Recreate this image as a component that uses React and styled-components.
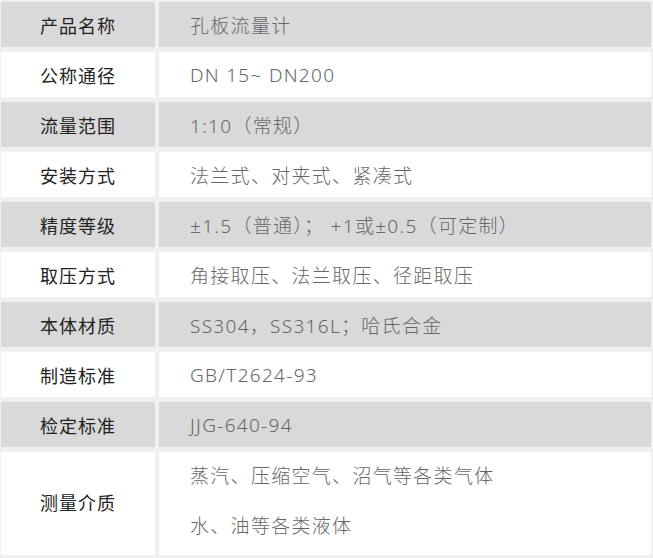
import styled, { createGlobalStyle } from 'styled-components';

const GlobalStyle = createGlobalStyle`
  html, body {
    margin: 0;
    padding: 0;
    background: #f0f0f0;
  }
  body {
    font-family: "Noto Sans", "Noto Sans CJK SC", sans-serif;
  }
`;

const Table = styled.div`
  width: 653px;
  height: 558px;
  box-sizing: border-box;
  padding: 2px 2px 3px 1px;
  display: grid;
  grid-template-columns: 154px 1fr;
  grid-auto-rows: 45px;
  column-gap: 4px;
  row-gap: 5px;
  background: #f0f0f0;
`;

const Label = styled.div`
  background: ${(p) => (p.$grey ? '#d9d9d9' : '#ffffff')};
  display: flex;
  align-items: center;
  justify-content: center;
  font-size: 18px;
  letter-spacing: 1px;
  color: #222;
`;

const Value = styled.div`
  background: ${(p) => (p.$grey ? '#d9d9d9' : '#ffffff')};
  display: flex;
  flex-direction: column;
  justify-content: center;
  padding-left: 31px;
  font-size: 19px;
  letter-spacing: 1.3px;
  color: #666;
  font-weight: 300;
`;

const Line = styled.div`
  line-height: 50px;
`;

const LastLabel = styled(Label)`
  height: 103px;
  padding-bottom: 4px;
  box-sizing: border-box;
`;

const LastValue = styled(Value)`
  height: 103px;
  padding-bottom: 6px;
  box-sizing: border-box;
`;

const rows = [
  ['产品名称', '孔板流量计'],
  ['公称通径', 'DN 15~ DN200'],
  ['流量范围', '1:10（常规）'],
  ['安装方式', '法兰式、对夹式、紧凑式'],
  ['精度等级', '±1.5（普通）； +1或±0.5（可定制）'],
  ['取压方式', '角接取压、法兰取压、径距取压'],
  ['本体材质', 'SS304，SS316L；哈氏合金'],
  ['制造标准', 'GB/T2624-93'],
  ['检定标准', 'JJG-640-94'],
];

export default function App() {
  return (
    <>
      <GlobalStyle />
      <Table>
        {rows.map(([k, v], i) => [
          <Label key={k} $grey={i % 2 === 0}>{k}</Label>,
          <Value key={k + 'v'} $grey={i % 2 === 0}>{v}</Value>,
        ])}
        <LastLabel>测量介质</LastLabel>
        <LastValue>
          <Line>蒸汽、压缩空气、沼气等各类气体</Line>
          <Line>水、油等各类液体</Line>
        </LastValue>
      </Table>
    </>
  );
}
